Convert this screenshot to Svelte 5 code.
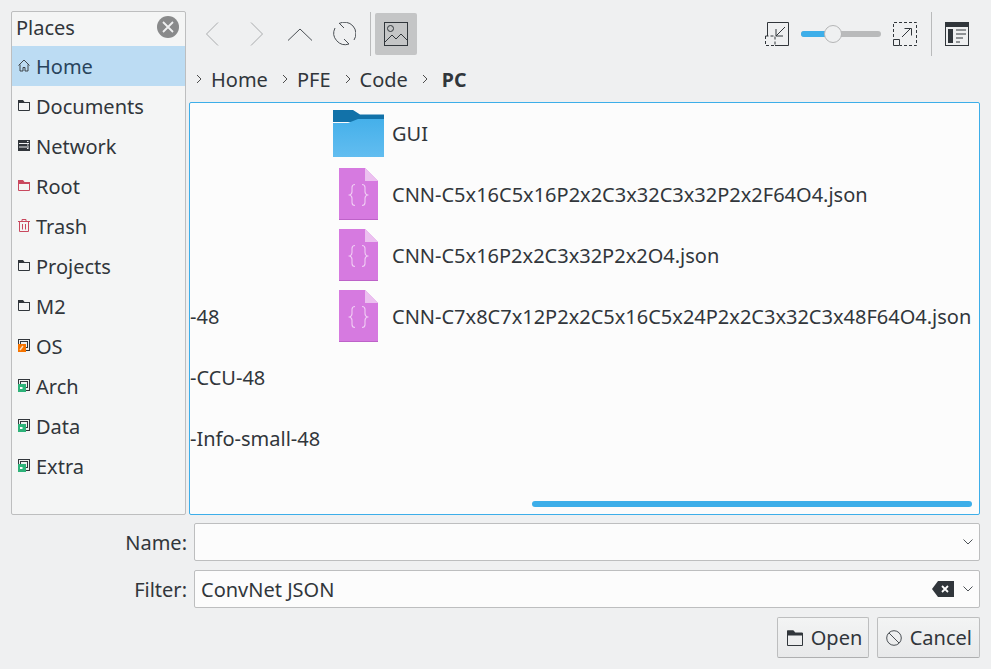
<script>
  const places = [
    { label: 'Home', icon: 'home', active: true },
    { label: 'Documents', icon: 'folder' },
    { label: 'Network', icon: 'network' },
    { label: 'Root', icon: 'root' },
    { label: 'Trash', icon: 'trash' },
    { label: 'Projects', icon: 'folder' },
    { label: 'M2', icon: 'folder' },
    { label: 'OS', icon: 'drive-os' },
    { label: 'Arch', icon: 'drive' },
    { label: 'Data', icon: 'drive' },
    { label: 'Extra', icon: 'drive' },
  ];

  const crumbs = ['Home', 'PFE', 'Code'];

  const clipped = ['', '', '', '-48', '-CCU-48', '-Info-small-48'];

  const files = [
    { name: 'GUI', dir: true },
    { name: 'CNN-C5x16C5x16P2x2C3x32C3x32P2x2F64O4.json' },
    { name: 'CNN-C5x16P2x2C3x32P2x2O4.json' },
    { name: 'CNN-C7x8C7x12P2x2C5x16C5x24P2x2C3x32C3x48F64O4.json' },
  ];
</script>

{#snippet placeIcon(kind)}
  <svg class="place-icon" viewBox="0 0 12 13" width="12" height="13">
    {#if kind === 'home'}
      <path d="M0.5 6.5 6 1l5.5 5.500M2 5.500v6.500h3V8.500h2V12h3V5.500" fill="none" stroke="#31363b" stroke-width=".9" />
    {:else if kind === 'folder'}
      <path d="M.5 11.500v-10h4l1.500 2h5.500v8z" fill="none" stroke="#31363b" />
      <path d="M0 1h5l1.500 2H12v1H0z" fill="#31363b" />
    {:else if kind === 'root'}
      <path d="M.5 11.500v-10h4l1.500 2h5.500v8z" fill="none" stroke="#c9495f" />
      <path d="M0 1h5l1.500 2H12v2H0z" fill="#c9495f" />
    {:else if kind === 'network'}
      <rect y="1" width="12" height="11" fill="#31363b" />
      <path d="M1 4.500h10M1 8h10" stroke="#eff0f1" />
      <path d="M9 2.500h1.500M9 6h1.500M9 9.500h1.500" stroke="#eff0f1" />
    {:else if kind === 'trash'}
      <path d="M1.500 3v9.500h9V3M0 2.500h12M4 2.500V.5h4v2M4.500 5v5.500M7.500 5v5.500" fill="none" stroke="#c9495f" />
    {:else}
      <rect x=".5" y=".5" width="11" height="11" fill="#eff0f1" stroke="#31363b" />
      <rect x="2.500" y="2.500" width="7" height="6" fill="none" stroke="#31363b" />
      <rect y="5" width="8" height="8" fill={kind === 'drive-os' ? '#f67400' : '#2eb37a'} />
      {#if kind === 'drive-os'}
        <path d="M2 11l3-4" stroke="#fde0c0" stroke-width="1.400" />
      {:else}
        <path d="M2 9h2.500" stroke="#fff" stroke-width="2" />
      {/if}
    {/if}
  </svg>
{/snippet}

{#snippet chevron()}
  <svg class="crumb-sep" viewBox="0 0 6 10" width="6" height="10">
    <path d="M1 1l4 4-4 4" fill="none" stroke="#4d4d4d" />
  </svg>
{/snippet}

{#snippet comboArrow()}
  <svg viewBox="0 0 10 6" width="10" height="6">
    <path d="M.5.5 5 5 9.500.5" fill="none" stroke="#4d5257" />
  </svg>
{/snippet}

<div class="dialog">
  <div class="top">
    <aside class="places">
      <div class="places-head">
        <span>Places</span>
        <svg viewBox="0 0 22 22" width="22" height="22">
          <circle cx="11" cy="11" r="11" fill="#898a8b" />
          <path d="M6 6l10 10M16 6 6 16" stroke="#eff0f1" stroke-width="1.800" />
        </svg>
      </div>
      {#each places as p}
        <div class="place" class:active={p.active}>
          {@render placeIcon(p.icon)}
          <span>{p.label}</span>
        </div>
      {/each}
    </aside>

    <main class="main">
      <div class="toolbar">
        <button class="tool">
          <svg viewBox="0 0 24 24" width="24" height="24"><path d="M17 .5 5.500 12 17 23.500" fill="none" stroke="#a9abad" /></svg>
        </button>
        <button class="tool">
          <svg viewBox="0 0 24 24" width="24" height="24"><path d="M6 .5 17.500 12 6 23.500" fill="none" stroke="#a9abad" /></svg>
        </button>
        <button class="tool">
          <svg viewBox="0 0 24 24" width="24" height="24"><path d="M0 18.500 12 7l12 11.500" fill="none" stroke="#4a4f54" /></svg>
        </button>
        <button class="tool">
          <svg viewBox="0 0 24 24" width="24" height="24">
            <path d="M7 1.500A11.500 11.500 0 0 1 22 18M3 6A11.500 11.500 0 0 0 17 22" fill="none" stroke="#4a4f54" />
            <path d="M7 1l5 5M12 17l5 5" fill="none" stroke="#4a4f54" />
          </svg>
        </button>
        <span class="sep"></span>
        <button class="tool on">
          <svg viewBox="0 0 24 24" width="24" height="24">
            <rect x=".5" y=".5" width="23" height="23" fill="none" stroke="#31363b" />
            <circle cx="6.500" cy="6.500" r="3" fill="none" stroke="#31363b" />
            <path d="M1 20l7-7 4 4 5-5 6 6" fill="none" stroke="#31363b" />
          </svg>
        </button>
        <div class="spacer"></div>
        <svg class="zoom-icon" viewBox="0 0 24 24" width="24" height="24">
          <path d="M2.500 14V.5h21v23H10" fill="none" stroke="#31363b" />
          <path d="M.5 14h9.500v9.500H.5z" fill="none" stroke="#31363b" stroke-dasharray="3 2" />
          <path d="M20 5 11 14M11 7V14H18" fill="none" stroke="#31363b" />
        </svg>
        <div class="slider"><div class="fill"></div><div class="knob"></div></div>
        <svg class="zoom-icon" viewBox="0 0 24 24" width="24" height="24">
          <path d="M.5 15V.5h23v23H7" fill="none" stroke="#31363b" stroke-dasharray="3 2" />
          <path d="M.5 17.500h6v6h-6z" fill="none" stroke="#31363b" />
          <path d="M9 15l9-9M11.500 6.500h7v7" fill="none" stroke="#31363b" />
        </svg>
        <span class="sep sep-right"></span>
        <svg class="panel-icon" viewBox="0 0 24 24" width="24" height="24">
          <rect x=".5" y=".5" width="23" height="23" fill="none" stroke="#31363b" />
          <rect width="24" height="5" fill="#31363b" />
          <rect x="3" y="7" width="5" height="14" fill="#31363b" />
          <path d="M11 8h10M11 12h10M11 16h7M11 20h4" stroke="#31363b" />
        </svg>
      </div>

      <nav class="crumbs">
        {@render chevron()}
        {#each crumbs as c}
          <span class="crumb">{c}</span>
          {@render chevron()}
        {/each}
        <span class="crumb current">PC</span>
      </nav>

      <section class="view">
        <div class="col-clipped">
          {#each clipped as t}
            <div class="row">{t}</div>
          {/each}
        </div>
        <div class="col-files">
          {#each files as f}
            <div class="row">
              <div class="thumb">
                {#if f.dir}
                  <svg viewBox="0 0 51 47" width="51" height="47">
                    <path d="M0 0h20l7 4.500h24V12H0z" fill="#1272a9" />
                    <path d="M0 13h15l10-4h26v38H0z" fill="url(#folderFill)" />
                    <defs>
                      <linearGradient id="folderFill" x1="0" y1="0" x2="0" y2="1">
                        <stop offset="0" stop-color="#45b0ea" />
                        <stop offset="1" stop-color="#62bdf0" />
                      </linearGradient>
                    </defs>
                  </svg>
                {:else}
                  <svg viewBox="0 0 39 52" width="39" height="52">
                    <path d="M0 0h26l13 13v39H0z" fill="#d67ae0" />
                    <path d="M0 51h39v1H0z" fill="#bd62c8" />
                    <path d="M26 0l13 13H26z" fill="#ecc0f0" />
                    <path d="M16 16.500c-2 0-3 1-3 3v4c0 2-1 3-2.500 3.500 1.500.5 2.500 1.500 2.500 3.500v4c0 2 1 3 3 3M23 16.500c2 0 3 1 3 3v4c0 2 1 3 2.500 3.500-1.500.5-2.500 1.500-2.500 3.500v4c0 2-1 3-3 3" fill="none" stroke="#f0cdf4" stroke-width="1.100" />
                  </svg>
                {/if}
              </div>
              <span>{f.name}</span>
            </div>
          {/each}
        </div>
        <div class="scrollbar"></div>
      </section>
    </main>
  </div>

  <div class="form">
    <label class="form-label" for="name">Name:</label>
    <div class="combo" id="name">
      <span class="combo-text"></span>
      {@render comboArrow()}
    </div>
    <label class="form-label" for="filter">Filter:</label>
    <div class="combo" id="filter">
      <span class="combo-text">ConvNet JSON</span>
      <svg class="clear" viewBox="0 0 22 16" width="22" height="16">
        <path d="M0 8l6-8h16v16H6z" fill="#31363b" />
        <path d="M10 5l6 6M16 5l-6 6" stroke="#fff" stroke-width="1.800" />
      </svg>
      {@render comboArrow()}
    </div>
  </div>

  <div class="actions">
    <button class="btn open">
      <svg viewBox="0 0 16 16" width="16" height="16">
        <path d="M.5 15.500V1h6l1.500 2h7.500v12.500z" fill="none" stroke="#31363b" />
        <path d="M0 .5h6.500L8 3h8v2.500H0z" fill="#31363b" />
      </svg>
      Open
    </button>
    <button class="btn">
      <svg viewBox="0 0 16 16" width="16" height="16">
        <circle cx="8" cy="8" r="7.300" fill="none" stroke="#4a4f54" />
        <path d="M3 3l10 10" stroke="#4a4f54" />
      </svg>
      Cancel
    </button>
  </div>
</div>

<style>
  :global(body) {
    background: #eff0f1;
  }

  .dialog {
    box-sizing: border-box;
    width: 991px;
    height: 669px;
    padding: 11px;
    background: #eff0f1;
    color: #31363b;
    font-family: "Noto Sans", sans-serif;
    font-size: 20px;
    overflow: hidden;
  }

  .top {
    display: flex;
    gap: 3px;
    height: 504px;
  }

  .places {
    box-sizing: border-box;
    width: 175px;
    flex-shrink: 0;
    background: #f4f5f5;
    border: 1px solid #bdbebf;
    border-radius: 2px;
  }

  .places-head {
    box-sizing: border-box;
    display: flex;
    align-items: center;
    justify-content: space-between;
    height: 34px;
    padding: 0 6px 4px 4px;
  }

  .place {
    display: flex;
    align-items: center;
    gap: 6px;
    height: 40px;
    padding-left: 6px;
  }

  .place.active {
    background: #bcdcf3;
    color: #29445c;
  }

  .place-icon {
    flex-shrink: 0;
    margin-bottom: 2px;
  }

  .main {
    flex: 1;
    min-width: 0;
    display: flex;
    flex-direction: column;
  }

  .toolbar {
    display: flex;
    align-items: center;
    height: 46px;
    padding-left: 2px;
  }

  .tool {
    display: flex;
    align-items: center;
    justify-content: center;
    width: 43.800px;
    height: 42px;
    padding: 0;
    border: none;
    border-radius: 2px;
    background: none;
  }

  .tool.on {
    width: 42px;
    margin-left: 4px;
    background: #c4c5c6;
  }

  .sep {
    width: 1px;
    height: 44px;
    margin-left: 4px;
    background: #b9babb;
  }

  .spacer {
    flex: 1;
  }

  .slider {
    position: relative;
    width: 80px;
    height: 6px;
    margin: 0 12px;
    border-radius: 3px;
    background: #b9babb;
  }

  .fill {
    width: 32px;
    height: 6px;
    border-radius: 3px 0 0 3px;
    background: #3daee9;
  }

  .knob {
    position: absolute;
    left: 23px;
    top: -6px;
    box-sizing: border-box;
    width: 18px;
    height: 18px;
    border: 1px solid #b4b5b6;
    border-radius: 50%;
    background: #eff0f1;
  }

  .sep-right {
    margin: 0 13px 0 14px;
  }

  .panel-icon {
    margin-right: 11px;
  }

  .crumbs {
    display: flex;
    align-items: center;
    height: 28px;
    margin-top: 8px;
    padding-left: 7px;
  }

  .crumb {
    margin: 0 14px 0 9px;
  }

  .crumb.current {
    font-weight: 700;
    margin-left: 14px;
    font-size: 19.500px;
  }

  .crumb-sep {
    flex-shrink: 0;
  }

  .view {
    position: relative;
    box-sizing: border-box;
    display: flex;
    height: 413px;
    margin-top: 9px;
    border: 1px solid #3daee9;
    border-radius: 2px;
    background: #fcfcfc;
    overflow: hidden;
  }

  .col-clipped {
    width: 140px;
    flex-shrink: 0;
  }

  .row {
    display: flex;
    align-items: center;
    height: 61px;
    white-space: nowrap;
    padding-bottom: 1px;
    box-sizing: border-box;
  }

  .thumb {
    display: flex;
    justify-content: center;
    width: 57px;
    margin-right: 5px;
    flex-shrink: 0;
  }

  .scrollbar {
    position: absolute;
    left: 342px;
    right: 7px;
    bottom: 7px;
    height: 6px;
    border-radius: 3px;
    background: #3daee9;
  }

  .form {
    display: grid;
    grid-template-columns: 176px 1fr;
    column-gap: 7px;
    row-gap: 9px;
    align-items: center;
    margin-top: 8px;
  }

  .form-label {
    text-align: right;
  }

  .combo {
    box-sizing: border-box;
    display: flex;
    align-items: center;
    gap: 9px;
    height: 38px;
    padding: 0 6px;
    border: 1px solid #bdbebf;
    border-radius: 2px;
    background: #fcfcfc;
  }

  .combo-text {
    flex: 1;
  }

  .actions {
    display: flex;
    justify-content: flex-end;
    gap: 8px;
    margin-top: 9px;
  }

  .btn {
    display: flex;
    align-items: center;
    gap: 7.500px;
    box-sizing: border-box;
    height: 41px;
    padding: 0 7px 0 8.500px;
    border: 1px solid #bdbebf;
    border-bottom-color: #aeafb0;
    border-radius: 2px;
    background: linear-gradient(#f3f4f4, #e8e9ea);
    color: #31363b;
    font-family: inherit;
    font-size: 20px;
  }

  .btn.open {
    width: 92px;
    gap: 8px;
    padding: 0 0 0 9px;
  }
</style>
